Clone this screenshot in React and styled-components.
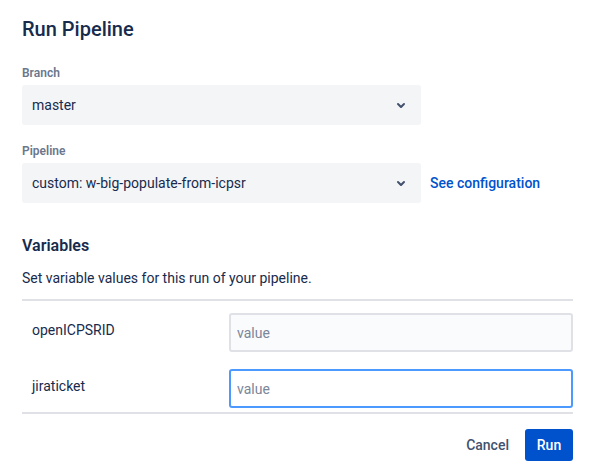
import styled, { createGlobalStyle } from "styled-components";

const GlobalStyle = createGlobalStyle`
    body {
        margin: 0;
        background: #fff;
        font-family: Roboto, "Liberation Sans", sans-serif;
        color: #172B4D;
    }
`

const ChevronDown = () => (
    <svg width="24" height="24" viewBox="0 0 24 24">
        <path fill="currentColor" d="M8.292 10.293a1.009 1.009 0 0 0 0 1.419l2.939 2.965c.218.215.5.322.779.322s.556-.107.769-.322l2.93-2.955a1.01 1.01 0 0 0 0-1.419.987.987 0 0 0-1.406 0l-2.298 2.317-2.307-2.327a.99.99 0 0 0-1.406 0z" />
    </svg>
)

const variables = ["openICPSRID", "jiraticket"]

const App = () => {
    return <>
    <GlobalStyle />
    <StyledDialog>
        <Title>Run Pipeline</Title>

        <Field>
            <Label>Branch</Label>
            <SelectRow>
                <Select>
                    <span>master</span>
                    <ChevronDown />
                </Select>
            </SelectRow>
        </Field>

        <Field>
            <Label>Pipeline</Label>
            <SelectRow>
                <Select>
                    <span>custom: w-big-populate-from-icpsr</span>
                    <ChevronDown />
                </Select>
                <ConfigLink href="#">See configuration</ConfigLink>
            </SelectRow>
        </Field>

        <SubTitle>Variables</SubTitle>
        <Description>Set variable values for this run of your pipeline.</Description>

        <VariableTable>
            {variables.map((name, i) => (
                <VariableRow key={name}>
                    <VariableName>{name}</VariableName>
                    <ValueInput placeholder="value" $focused={i === 1} />
                </VariableRow>
            ))}
        </VariableTable>

        <Footer>
            <CancelButton>Cancel</CancelButton>
            <RunButton>Run</RunButton>
        </Footer>
    </StyledDialog>
    </>
}

export default App

const StyledDialog = styled.div`
    width: 551px;
    padding: 17px 18px 0 22px;
    display: flex;
    flex-direction: column;
`

const Title = styled.h1`
    margin: 0;
    font-size: 20px;
    font-weight: 500;
    line-height: 24px;
    color: #172B4D;
`

const Field = styled.div`
    display: flex;
    flex-direction: column;
    margin-top: 24px;
    & + & { margin-top: 18px; }
`

const Label = styled.label`
    font-size: 12px;
    font-weight: 600;
    line-height: 16px;
    color: #6B778C;
    margin-bottom: 4px;
`

const SelectRow = styled.div`
    display: flex;
    align-items: center;
`

const Select = styled.div`
    width: 399px;
    height: 40px;
    box-sizing: border-box;
    display: flex;
    align-items: center;
    justify-content: space-between;
    padding: 0 8px 0 10px;
    background: #F4F5F7;
    border-radius: 3px;
    font-size: 14px;
    color: #172B4D;
    svg { color: #42526E; }
`

const ConfigLink = styled.a`
    margin-left: 9px;
    font-size: 14px;
    font-weight: 500;
    color: #0052CC;
    text-decoration: none;
`

const SubTitle = styled.h2`
    margin: 33px 0 0;
    font-size: 16px;
    font-weight: 600;
    line-height: 20px;
    color: #172B4D;
`

const Description = styled.p`
    margin: 12px 0 0;
    font-size: 14px;
    line-height: 20px;
    color: #172B4D;
`

const VariableTable = styled.div`
    margin-top: 11px;
    border-top: 2px solid #DFE1E6;
    border-bottom: 2px solid #DFE1E6;
    padding: 12px 0 4px;
    display: flex;
    flex-direction: column;
    gap: 17px;
`

const VariableRow = styled.div`
    display: grid;
    grid-template-columns: 207px 1fr;
    align-items: center;
`

const VariableName = styled.span`
    padding-left: 10px;
    font-size: 14px;
    color: #172B4D;
    margin-top: -6px;
`

const ValueInput = styled.input`
    height: 39px;
    box-sizing: border-box;
    width: 100%;
    border: 2px solid ${p => p.$focused ? "#4C9AFF" : "#DFE1E6"};
    background: ${p => p.$focused ? "#FFFFFF" : "#FAFBFC"};
    border-radius: 3px;
    padding: 0 6px;
    font-family: inherit;
    font-size: 14px;
    color: #172B4D;
    outline: none;
    &::placeholder { color: #7A869A; }
`

const Footer = styled.div`
    display: flex;
    justify-content: flex-end;
    gap: 12px;
    padding-top: 15px;
`

const CancelButton = styled.button`
    height: 32px;
    padding: 0 4px;
    border: none;
    background: transparent;
    font-family: inherit;
    font-size: 14px;
    font-weight: 500;
    color: #42526E;
`

const RunButton = styled.button`
    height: 32px;
    width: 48px;
    border: none;
    border-radius: 3px;
    background: #0052CC;
    font-family: inherit;
    font-size: 14px;
    font-weight: 500;
    color: #fff;
`
